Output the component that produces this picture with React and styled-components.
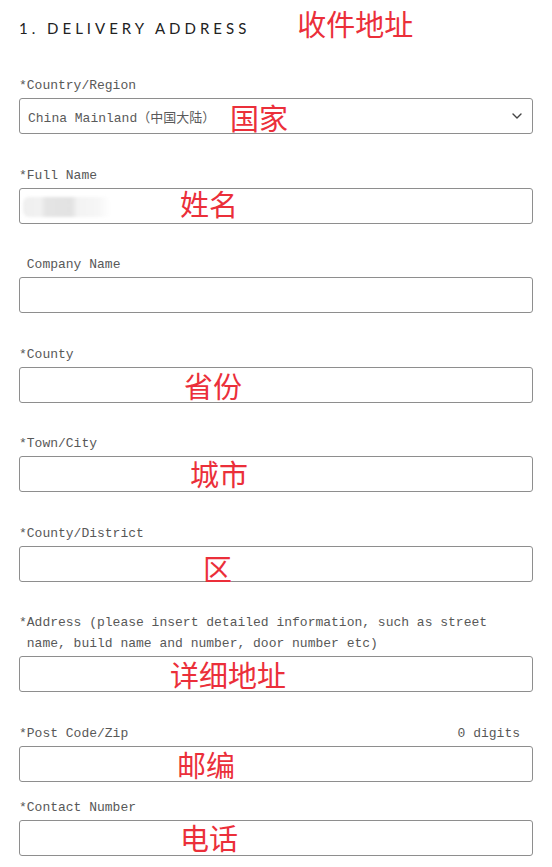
import React from 'react';
import styled, { createGlobalStyle } from 'styled-components';

const GlobalStyle = createGlobalStyle`
  html, body {
    margin: 0;
    padding: 0;
    background: #fff;
  }
  * {
    box-sizing: border-box;
  }
`;

const Page = styled.div`
  width: 552px;
  padding: 9px 19px 0;
  font-family: "Liberation Mono", monospace;
`;

const HeadingRow = styled.div`
  display: flex;
  align-items: flex-start;
  margin-bottom: 37.3px;
`;

const Heading = styled.h2`
  margin: 10.2px 0 0;
  font-family: Lato, "Noto Sans", sans-serif;
  font-size: 15px;
  line-height: 18px;
  font-weight: 400;
  letter-spacing: 4px;
  color: #222;
`;

const Note = styled.span`
  font-family: "Noto Sans CJK SC", "Noto Sans", sans-serif;
  font-size: 29px;
  line-height: 29px;
  color: #eb2f3a;
  white-space: nowrap;
`;

const HeadingNote = styled(Note)`
  margin-left: 47px;
`;

const InputNote = styled(Note)`
  position: absolute;
  left: ${p => p.$left}px;
  top: ${p => p.$top}px;
  pointer-events: none;
`;

const Field = styled.div`
  margin-bottom: ${p => (p.$tight ? 15.2 : 30.5)}px;
`;

const LabelRow = styled.div`
  display: flex;
  justify-content: space-between;
  align-items: flex-start;
  padding-right: 13px;
  margin-bottom: 2px;
`;

const Label = styled.label`
  font-size: 13px;
  line-height: 21px;
  color: #585858;
  white-space: pre-wrap;
`;

const Hint = styled.span`
  font-size: 13px;
  line-height: 21px;
  color: #585858;
`;

const InputWrap = styled.div`
  position: relative;
`;

const TextInput = styled.input`
  display: block;
  width: 100%;
  height: 36px;
  margin: 0;
  padding: 0 8px;
  border: 1px solid #8e8e8e;
  border-radius: 3px;
  background: #fff;
  font-family: "Liberation Mono", monospace;
  font-size: 13px;
  color: #555;
  outline: none;
`;

const SelectBox = styled.div`
  display: flex;
  align-items: center;
  justify-content: space-between;
  height: 36px;
  padding: 0 10px 0 8px;
  border: 1px solid #8e8e8e;
  border-radius: 3px;
  font-family: "Liberation Mono", "Noto Sans CJK SC", monospace;
  font-size: 13px;
  color: #5a5a5a;
`;

const Blurred = styled.div`
  position: absolute;
  left: 4px;
  top: 9px;
  width: 88px;
  height: 20px;
  border-radius: 6px;
  background: linear-gradient(
    90deg,
    #efefef 0%,
    #f1f1f1 20%,
    #e4e4e4 26%,
    #e2e2e2 55%,
    #f3f3f3 62%,
    #f6f6f6 85%,
    #fff 100%
  );
  filter: blur(1.5px);
`;

const Chevron = () => (
  <svg width="10" height="6" viewBox="0 0 10 6" fill="none">
    <path d="M1 1l4 4 4-4" stroke="#444" strokeWidth="1.4" strokeLinecap="round" strokeLinejoin="round" />
  </svg>
);

const fields = [
  { label: '*Full Name', note: '姓名', left: 161, top: 1.5, blurred: true },
  { label: ' Company Name' },
  { label: '*County', note: '省份', left: 165, top: 4.5 },
  { label: '*Town/City', note: '城市', left: 171, top: 2.5 },
  { label: '*County/District', note: '区', left: 184, top: 8.5 },
  {
    label: '*Address (please insert detailed information, such as street\n name, build name and number, door number etc)',
    note: '详细地址',
    left: 151,
    top: 4,
  },
  { label: '*Post Code/Zip', hint: '0 digits', note: '邮编', left: 158, top: 4.5, tight: true },
  { label: '*Contact Number', note: '电话', left: 161, top: 3 },
];

const App = () => {
  return (
    <Page>
      <GlobalStyle />
      <HeadingRow>
        <Heading>1. DELIVERY ADDRESS</Heading>
        <HeadingNote>收件地址</HeadingNote>
      </HeadingRow>

      <Field>
        <LabelRow>
          <Label>*Country/Region</Label>
        </LabelRow>
        <InputWrap>
          <SelectBox>
            <span>China Mainland（中国大陆）</span>
            <Chevron />
          </SelectBox>
          <InputNote $left={211} $top={4.5}>国家</InputNote>
        </InputWrap>
      </Field>

      {fields.map(f => (
        <Field key={f.label} $tight={f.tight}>
          <LabelRow>
            <Label>{f.label}</Label>
            {f.hint && <Hint>{f.hint}</Hint>}
          </LabelRow>
          <InputWrap>
            <TextInput type="text" />
            {f.blurred && <Blurred />}
            {f.note && (
              <InputNote $left={f.left} $top={f.top}>
                {f.note}
              </InputNote>
            )}
          </InputWrap>
        </Field>
      ))}
    </Page>
  );
};

export default App;
